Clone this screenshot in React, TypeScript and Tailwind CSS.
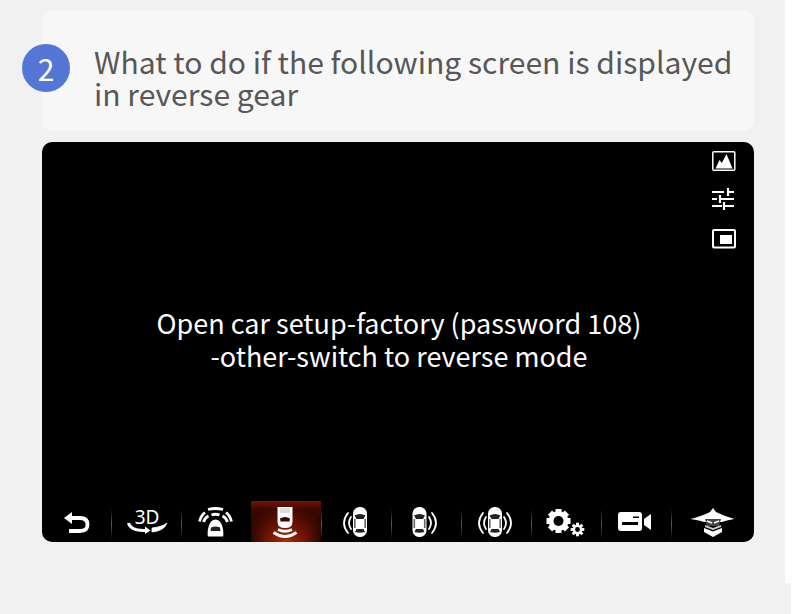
import React from 'react';

const font = { fontFamily: '"Noto Sans CJK SC", "Noto Sans", sans-serif' };

function CarTop() {
  return (
    <g>
      <rect x="-7" y="4" width="14" height="30" rx="6.5" fill="#fff" />
      <path d="M-5.500 12.500 Q0 9.500 5.500 12.500 L3.500 16 H-3.500 Z" fill="#222" />
      <path d="M-3.500 26 H3.500 L5 29 Q0 30.500 -5 29 Z" fill="#222" />
      <rect x="-6" y="16" width="1.600" height="9" fill="#666" />
      <rect x="4.400" y="16" width="1.600" height="9" fill="#666" />
    </g>
  );
}

function Waves({ dir, x }: { dir: 1 | -1; x: number }) {
  return (
    <g transform={`translate(${x} 20) scale(${dir} 1)`} fill="none" stroke="#fff" strokeLinecap="round">
      <path d="M0 -6 Q4 0 0 6" strokeWidth="1.800" />
      <path d="M3 -10 Q11 0 3 10" strokeWidth="1.800" />
    </g>
  );
}

function BackIcon() {
  return (
    <svg width="70" height="39" viewBox="0 0 70 39">
      <path d="M26 15 H38 Q45.500 15 45.500 21.500 Q45.500 28 38 28 H27" fill="none" stroke="#fff" strokeWidth="3.800" />
      <path d="M22 15 L30 9 V21 Z" fill="#fff" />
    </svg>
  );
}

function ThreeDIcon() {
  return (
    <svg width="70" height="39" viewBox="0 0 70 39">
      <text x="35" y="21" textAnchor="middle" fill="#fff" fontSize="19" fontFamily="Noto Sans, sans-serif">
        3D
      </text>
      <path d="M16.500 20 Q18 27 31 27.500 H34" fill="none" stroke="#fff" strokeWidth="3" />
      <path d="M33 23.500 L38.500 27.500 L33 31 Z" fill="#fff" />
      <path d="M40 29 Q52 28 55 20 Q50 24 40 25 Z" fill="#fff" stroke="#fff" strokeWidth="0.800" />
    </svg>
  );
}

function FrontRadarIcon() {
  return (
    <svg width="70" height="39" viewBox="0 0 70 39">
      <path d="M26.500 24 Q25 30 26 33.500 H41 Q42 30 40.500 24 Q38.500 16.500 33.500 16.500 Q28.500 16.500 26.500 24 Z" fill="#fff" />
      <path d="M29 24.500 Q33.500 22.500 38 24.500 L38.500 28 H28.500 Z" fill="#222" />
      <g fill="none" stroke="#fff" strokeWidth="2.800">
        <path d="M21.500 19 Q23 14.500 26.500 13" />
        <path d="M29.500 12 Q33.500 10.500 37.500 12" />
        <path d="M40.500 13 Q44 14.500 45.500 19" />
        <path d="M17.500 18.500 Q19 12.500 23 9.500" />
        <path d="M26 6.500 Q33.500 4.500 41 6.500" />
        <path d="M44 9.500 Q48 12.500 49.500 18.500" />
      </g>
    </svg>
  );
}

function RearRadarIcon() {
  return (
    <svg width="70" height="39" viewBox="0 0 70 39">
      <path d="M25.500 4 H40.500 V19 Q40.500 25 33 25 Q25.500 25 25.500 19 Z" fill="#fff" />
      <rect x="28" y="5" width="10" height="5" fill="#dddddd" />
      <path d="M28 15.500 Q33 12.500 38 15.500 L37.500 18.500 H28.500 Z" fill="#3a0a00" />
      <g fill="none" stroke="#fff" strokeWidth="2.800">
        <path d="M26 26.500 Q33 30 40 26.500" />
        <path d="M21.500 29.500 Q33 37.500 44.500 29.500" />
      </g>
    </svg>
  );
}

function CarLeftIcon() {
  return (
    <svg width="70" height="39" viewBox="0 0 70 39">
      <g transform="translate(38 0)">
        <CarTop />
      </g>
      <Waves dir={-1} x={29} />
    </svg>
  );
}

function CarRightIcon() {
  return (
    <svg width="70" height="39" viewBox="0 0 70 39">
      <g transform="translate(27.500 0)">
        <CarTop />
      </g>
      <Waves dir={1} x={37} />
    </svg>
  );
}

function CarBothIcon() {
  return (
    <svg width="70" height="39" viewBox="0 0 70 39">
      <g transform="translate(33 0)">
        <CarTop />
      </g>
      <Waves dir={-1} x={24} />
      <Waves dir={1} x={42} />
    </svg>
  );
}

function GearShape({ cx, cy, r, hole, width }: { cx: number; cy: number; r: number; hole: number; width: number }) {
  return (
    <g>
      {[0, 45, 90, 135].map((a) => (
        <rect
          key={a}
          x={cx - width / 2}
          y={cy - r - 2}
          width={width}
          height={2 * r + 4}
          fill="#fff"
          transform={`rotate(${a} ${cx} ${cy})`}
        />
      ))}
      <circle cx={cx} cy={cy} r={r} fill="#fff" />
      <circle cx={cx} cy={cy} r={hole} fill="#000" />
    </g>
  );
}

function GearsIcon() {
  return (
    <svg width="70" height="39" viewBox="0 0 70 39">
      <GearShape cx={26.500} cy={18} r={10} hole={5} width={6} />
      <GearShape cx={45.500} cy={26.500} r={4.800} hole={2.400} width={3} />
    </svg>
  );
}

function CameraIcon() {
  return (
    <svg width="70" height="39" viewBox="0 0 70 39">
      <path
        fillRule="evenodd"
        fill="#fff"
        d="M19 9 H37 Q40 9 40 12 V25 Q40 28 37 28 H19 Q16 28 16 25 V12 Q16 9 19 9 Z M20 19 V22 H36 V19 Z M31 13.500 V15 H37 V13.500 Z"
      />
      <path d="M42 16 L49 11 V27 L42 22 Z" fill="#fff" />
    </svg>
  );
}

function NinjaIcon() {
  return (
    <svg width="70" height="39" viewBox="0 0 70 39">
      <path d="M38 9 L41 5 L44 9 Q52 13 62.500 16 Q54 17.500 50 19 H32 Q28 17.500 18.500 16 Q30 13 38 9 Z" fill="#fff" />
      <path d="M33 16 H49 L47 23 H35 Z" fill="#444" />
      <path d="M35 18 L40 20 M47 18 L42 20" stroke="#fff" strokeWidth="1.400" />
      <path d="M32 25 L41 28.500 L50 25 V29 L41 34 L32 29 Z" fill="#fff" />
      <path d="M33 22 L41 25 L49 22 V24 L41 27 L33 24 Z" fill="#ccc" />
    </svg>
  );
}

const barIcons = [
  BackIcon,
  ThreeDIcon,
  FrontRadarIcon,
  RearRadarIcon,
  CarLeftIcon,
  CarRightIcon,
  CarBothIcon,
  GearsIcon,
  CameraIcon,
  NinjaIcon,
];

export default function App() {
  return (
    <div className="w-[800px] h-[614px] bg-white overflow-hidden" style={font}>
      <div className="w-[785px] h-[583px] bg-[#f1f1f1] pt-[10px] pl-[42px]">
        <div className="w-[712px] h-[121px] bg-[#f7f7f7] rounded-[10px] flex items-start pt-[34px]">
          <div className="w-12 h-12 -ml-5 shrink-0 rounded-full bg-[#5576d6] text-white text-[30px] leading-[48px] text-center">
            2
          </div>
          <p className="ml-6 mt-px text-[#575757] text-[30.1px] leading-[32px] whitespace-nowrap">
            What to do if the following screen is displayed
            <br />
            in reverse gear
          </p>
        </div>

        <div className="relative mt-[11px] w-[712px] h-[400px] bg-black rounded-[10px] overflow-hidden flex flex-col">
          <div className="absolute top-[7px] right-[18px] flex flex-col items-center gap-[15px]">
            <svg width="24" height="24" viewBox="0 0 24 24">
              <rect x="0.800" y="2.800" width="22" height="18.500" rx="1" fill="none" stroke="#fff" strokeWidth="1.500" />
              <path d="M3.500 19.500 L7.500 11 L9.800 14 L14.500 5 L20.500 19.500 Z" fill="#fff" />
            </svg>
            <svg width="24" height="24" viewBox="0 0 24 24" stroke="#fff" strokeWidth="2.200" fill="none">
              <path d="M0 4 H12 M16 0 V8 M16 4 H22 M0 11 H5 M8 7 V15 M8 11 H22 M0 18 H10 M12 14 V22 M12 18 H22" />
            </svg>
            <svg width="24" height="24" viewBox="0 0 24 24">
              <rect x="1" y="3" width="22" height="17.500" rx="1" fill="none" stroke="#fff" strokeWidth="2" />
              <rect x="8" y="8" width="12" height="9" fill="#fff" />
            </svg>
          </div>

          <div className="flex-1 flex items-start justify-center pt-[164px] pl-[2px]">
            <p className="text-white text-[27px] leading-[33px] text-center whitespace-nowrap">
              Open car setup-factory (password 108)
              <br />
              -other-switch to reverse mode
            </p>
          </div>

          <div className="flex h-[39px]">
            {barIcons.map((Icon, i) => (
              <div key={i} className="relative w-[70px] h-full">
                {i === 3 && (
                  <div className="absolute -left-px -top-[2px] bottom-0 w-[70px] bg-[radial-gradient(ellipse_60%_90%_at_50%_100%,#a82c00_0%,#6a1200_50%,transparent_100%),linear-gradient(to_bottom,#7a1400_0%,#3c0800_20%,#1e0400_70%,#000000_100%)]" />
                )}
                <div className="relative">
                  <Icon />
                </div>
                {i < 9 && (
                  <div className="absolute right-0 top-[6px] bottom-[3px] w-px bg-gradient-to-b from-transparent via-[#5a5a5a] to-transparent" />
                )}
              </div>
            ))}
          </div>
        </div>
      </div>
      <div className="w-[791px] h-[31px] bg-[#f1f1f1]" />
    </div>
  );
}
